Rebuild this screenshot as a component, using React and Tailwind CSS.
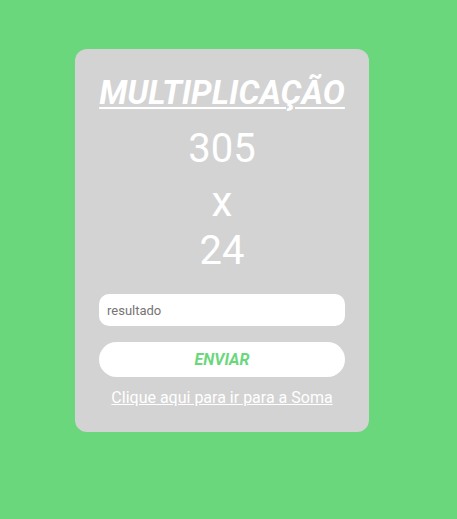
import React, { useState } from 'react';

const font = { fontFamily: 'Roboto, "Liberation Sans", sans-serif' };

/** 카드: 곱셈 문제 */
const App = () => {
  const [resultado, setResultado] = useState('');

  return (
    <div className="min-h-[519px] w-full bg-[#6bd77c] pt-[49px] pl-[75px]" style={font}>
      <div className="w-[294px] h-[383px] bg-[#d3d3d3] rounded-xl flex flex-col items-center pt-[27px] px-6">
        <h1 className="text-[33px] leading-none font-bold italic underline text-white decoration-[2px] underline-offset-[3px]">
          MULTIPLICAÇÃO
        </h1>

        <div className="mt-[20px] text-[40px] leading-none text-white">305</div>
        <div className="mt-[12px] text-[42px] leading-none text-white">x</div>
        <div className="mt-[8px] text-[40px] leading-none text-white">24</div>

        <input
          type="text"
          value={resultado}
          onChange={(e) => setResultado(e.target.value)}
          placeholder="resultado"
          className="mt-[23px] w-full h-[32px] rounded-[10px] bg-white px-2 text-[13px] text-gray-700 placeholder:text-[#757575] outline-none"
          style={font}
        />

        <button
          type="button"
          className="mt-4 w-full h-[35px] rounded-full bg-white text-[16px] font-bold italic text-[#6bd77c]"
          style={font}
        >
          ENVIAR
        </button>

        <a href="#" className="mt-[13px] text-[16px] leading-none text-white underline">
          Clique aqui para ir para a Soma
        </a>
      </div>
    </div>
  );
};

export default App;
